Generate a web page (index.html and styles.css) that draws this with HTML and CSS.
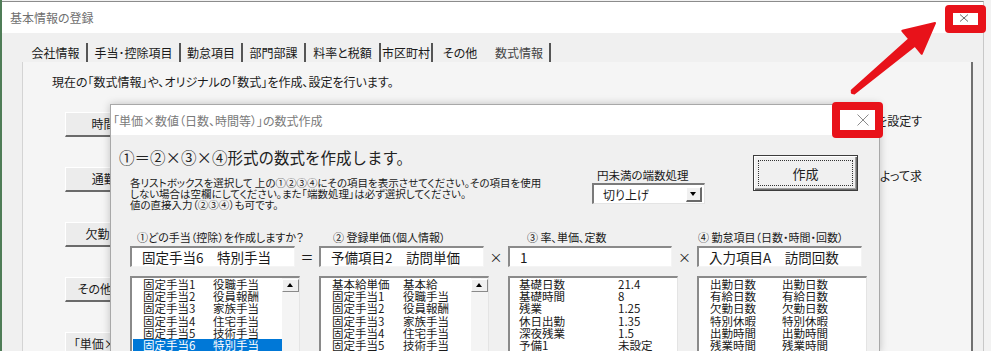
FILE: index.html
```html
<!DOCTYPE html>
<html lang="ja">

<head>
    <meta charset="UTF-8">
    <meta name="viewport" content="width=device-width, initial-scale=1.0">
    <title>基本情報の登録</title>
    <link rel="stylesheet" href="styles.css">
</head>

<body>
    <div class="window">
        <div class="titlebar">
            <span class="title">基本情報の登録</span>
            <svg class="close-outer" width="10" height="8" viewBox="0 0 10 8">
                <path d="M1 0.5L9 7.5M9 0.5L1 7.5" stroke="#6b6b6b" stroke-width="1" fill="none"/>
            </svg>
        </div>

        <div class="window-body">
            <div class="tabs">
                <span class="tab">会社情報</span>
                <span class="tab">手当･控除項目</span>
                <span class="tab">勤怠項目</span>
                <span class="tab">部門部課</span>
                <span class="tab">料率と税額</span>
                <span class="tab">市区町村</span>
                <span class="tab before-active">その他</span>
                <span class="tab active">数式情報</span>
            </div>

            <div class="page">
                <p class="intro">現在の「数式情報」や、オリジナルの「数式」を作成、設定を行います。</p>

                <div class="rows">
                    <div class="row">
                        <div class="btn">時間外・休日・深夜</div>
                        <div class="note">時間外手当などの単価を基に計算する数式を設定す</div>
                    </div>
                    <div class="row">
                        <div class="btn">通勤手当の計算式</div>
                        <div class="note">通勤手当を距離や日数によって求</div>
                    </div>
                    <div class="row">
                        <div class="btn">欠勤、遅刻・早退控除</div>
                        <div class="note"></div>
                    </div>
                    <div class="row">
                        <div class="btn">その他数式の作成・設定</div>
                        <div class="note"></div>
                    </div>
                    <div class="row">
                        <div class="btn">「単価×数値」の数式作成</div>
                        <div class="note"></div>
                    </div>
                </div>
            </div>
        </div>
    </div>

    <div class="dialog">
        <div class="dlg-titlebar">
            <span class="dlg-title">「単価×数値（日数、時間等）」の数式作成</span>
            <svg class="close-inner" width="12" height="12" viewBox="0 0 12 12">
                <path d="M0.5 0.5L11.5 11.5M11.5 0.5L0.5 11.5" stroke="#8a8a8a" stroke-width="1" fill="none"/>
            </svg>
        </div>

        <div class="dlg-body">
            <div class="dlg-top">
                <div class="lead">
                    <h1>①＝②×③×④形式の数式を作成します。</h1>
                    <p>各リストボックスを選択して 上の①②③④にその項目を表示させてください。その項目を使用<br>しない場合は空欄にしてください。また「端数処理」は必ず選択してください。<br>値の直接入力（②③④）も可です。</p>
                </div>
                <div class="rounding">
                    <div class="rounding-label">円未満の端数処理</div>
                    <div class="select">
                        <span>切り上げ</span>
                        <span class="drop"></span>
                    </div>
                </div>
                <button class="make">作成</button>
            </div>

            <div class="fields">
                <div class="cap c1 cap-a">①どの手当（控除）を作成しますか？</div>
                <div class="cap c2 cap-b">② 登録単価（個人情報）</div>
                <div class="cap c3 cap-c">③ 率、単価、定数</div>
                <div class="cap c4 cap-d">④ 勤怠項目（日数・時間・回数）</div>

                <div class="input c1">固定手当6　特別手当</div>
                <div class="op o1">＝</div>
                <div class="input c2">予備項目2　訪問単価</div>
                <div class="op o2">×</div>
                <div class="input c3">1</div>
                <div class="op o3">×</div>
                <div class="input c4">入力項目A　訪問回数</div>

                <div class="list c1 list-a">
                    <div class="items">
                        <div class="item"><span class="k">固定手当1</span><span>役職手当</span></div>
                        <div class="item"><span class="k">固定手当2</span><span>役員報酬</span></div>
                        <div class="item"><span class="k">固定手当3</span><span>家族手当</span></div>
                        <div class="item"><span class="k">固定手当4</span><span>住宅手当</span></div>
                        <div class="item"><span class="k">固定手当5</span><span>技術手当</span></div>
                        <div class="item selected"><span class="k">固定手当6</span><span>特別手当</span></div>
                        <div class="item"><span class="k">固定手当7</span><span>資格手当</span></div>
                    </div>
                    <div class="scroll"><div class="scroll-up"></div></div>
                </div>

                <div class="list c2 list-b">
                    <div class="items">
                        <div class="item"><span class="k">基本給単価</span><span>基本給</span></div>
                        <div class="item"><span class="k">固定手当1</span><span>役職手当</span></div>
                        <div class="item"><span class="k">固定手当2</span><span>役員報酬</span></div>
                        <div class="item"><span class="k">固定手当3</span><span>家族手当</span></div>
                        <div class="item"><span class="k">固定手当4</span><span>住宅手当</span></div>
                        <div class="item"><span class="k">固定手当5</span><span>技術手当</span></div>
                        <div class="item"><span class="k">固定手当6</span><span>特別手当</span></div>
                    </div>
                    <div class="scroll"><div class="scroll-up"></div></div>
                </div>

                <div class="list c3 list-c">
                    <div class="items">
                        <div class="item"><span class="k">基礎日数</span><span>21.4</span></div>
                        <div class="item"><span class="k">基礎時間</span><span>8</span></div>
                        <div class="item"><span class="k">残業</span><span>1.25</span></div>
                        <div class="item"><span class="k">休日出勤</span><span>1.35</span></div>
                        <div class="item"><span class="k">深夜残業</span><span>1.5</span></div>
                        <div class="item"><span class="k">予備1</span><span>未設定</span></div>
                        <div class="item"><span class="k">予備2</span><span>未設定</span></div>
                    </div>
                </div>

                <div class="list c4 list-d">
                    <div class="items">
                        <div class="item"><span class="k">出勤日数</span><span>出勤日数</span></div>
                        <div class="item"><span class="k">有給日数</span><span>有給日数</span></div>
                        <div class="item"><span class="k">欠勤日数</span><span>欠勤日数</span></div>
                        <div class="item"><span class="k">特別休暇</span><span>特別休暇</span></div>
                        <div class="item"><span class="k">出勤時間</span><span>出勤時間</span></div>
                        <div class="item"><span class="k">残業時間</span><span>残業時間</span></div>
                        <div class="item"><span class="k">休出日数</span><span>休出日数</span></div>
                    </div>
                </div>
            </div>
        </div>
    </div>

    <!-- annotation: red boxes and arrow -->
    <div class="mark mark-outer"></div>
    <div class="mark mark-inner"></div>
    <svg class="arrow" width="991" height="351" viewBox="0 0 991 351">
        <polygon points="851.7,90.5 909.1,38.9 902.3,30.8 935,23 921.7,53.8 914.9,45.7 854.3,93.5"
            fill="#e8121a" stroke="#e8121a" stroke-width="2" stroke-linejoin="round"/>
        <circle cx="853" cy="92" r="2.3" fill="#e8121a"/>
    </svg>
</body>

</html>
```

FILE: styles.css
```css
html,
body {
    margin: 0;
    height: 351px;
    overflow: hidden;
}

body {
    position: relative;
    background: linear-gradient(to right, #4f7d57 0 2px, #f2f2f2 2px);
    font-family: "Noto Sans CJK JP", sans-serif;
    color: #1a1a1a;
}

/* outer window */

.window {
    margin: 1px 0 0 2px;
    width: 981px;
    height: 350px;
    overflow: hidden;
    border-top: 1px solid #8c8c8c;
    border-right: 1px solid #c8c8c8;
    background: #f0f0f0;
}

.titlebar {
    display: flex;
    justify-content: space-between;
    align-items: center;
    height: 31px;
    background: #fff;
}

.title {
    margin-left: 8px;
    font-size: 12px;
    color: #707070;
    font-feature-settings: "palt";
}

.close-outer {
    margin-right: 14px;
}

.window-body {
    padding: 0 10px 0 20px;
}

.tabs {
    display: grid;
    grid-template-columns: 63px 93px 62px 63px 75px 52px 56px 62px;
    height: 29px;
    margin-left: 3px;
}

.tab {
    align-self: end;
    height: 19px;
    line-height: 19px;
    font-size: 12px;
    text-align: center;
    white-space: nowrap;
    border-right: 2px solid #555;
    box-sizing: border-box;
    font-feature-settings: "palt";
}

.tab.before-active {
    border-right-color: transparent;
}

.tab.active {
    color: #444;
}

.page {
    height: 289px;
    overflow: hidden;
    padding: 12px 49px 0 29px;
    border-left: 1px solid #d4d4d4;
    border-right: 2px solid #707070;
    background: #f5f5f5;
}

.intro {
    margin: 0;
    font-size: 12px;
    line-height: 16px;
    font-feature-settings: "palt";
}

.rows {
    display: flex;
    flex-direction: column;
    gap: 30px;
    margin-top: 22px;
}

.row {
    display: flex;
    height: 25px;
}

.btn {
    margin-left: 13px;
    width: 150px;
    height: 25px;
    box-sizing: border-box;
    font-size: 12px;
    line-height: 22px;
    text-align: center;
    white-space: nowrap;
    overflow: hidden;
    background: #ececec;
    border-style: solid;
    border-width: 1px 2px 2px 1px;
    border-color: #fff #6a6a6a #6a6a6a #fff;
    font-feature-settings: "palt";
}

.note {
    flex: 1;
    padding-top: 1px;
    font-size: 12px;
    line-height: 16px;
    text-align: right;
    white-space: nowrap;
    overflow: hidden;
    font-feature-settings: "palt";
}

/* inner dialog */

.dialog {
    position: absolute;
    left: 110px;
    top: 104px;
    width: 768px;
    height: 247px;
    overflow: hidden;
    border: 1px solid #a8a8a8;
    border-bottom: 0;
    background: #f0f0f0;
    box-shadow: 0 0 8px rgba(0, 0, 0, 0.22);
}

.dlg-titlebar {
    display: flex;
    justify-content: space-between;
    align-items: center;
    height: 30px;
    background: #fff;
}

.dlg-title {
    margin-left: 2px;
    font-size: 12px;
    color: #7a7a7a;
    font-feature-settings: "palt";
}

.close-inner {
    margin-right: 10px;
}

.dlg-body {
    padding: 12px 0 0 8px;
}

.dlg-top {
    display: flex;
    height: 83px;
}

.lead {
    width: 473px;
}

.lead h1 {
    margin: 0;
    font-size: 15.5px;
    font-weight: 400;
    line-height: 20px;
    color: #222;
}

.lead p {
    margin: 10px 0 0 11px;
    font-size: 10.5px;
    line-height: 11px;
    white-space: nowrap;
    font-feature-settings: "palt";
}

.rounding {
    width: 113px;
    margin-top: 21px;
}

.rounding-label {
    margin-left: 5px;
    font-size: 11.5px;
    line-height: 14px;
    font-feature-settings: "palt";
}

.select {
    display: flex;
    align-items: center;
    justify-content: space-between;
    margin-top: 1px;
    height: 21px;
    box-sizing: border-box;
    padding: 0 2px 0 9px;
    background: #fff;
    border-style: solid;
    border-width: 2px 1px 1px 2px;
    border-color: #7a7a7a #e4e4e4 #e4e4e4 #7a7a7a;
    font-size: 12px;
    font-feature-settings: "palt";
}

.drop {
    position: relative;
    width: 16px;
    height: 15px;
    box-sizing: border-box;
    background: #f0f0f0;
    border-style: solid;
    border-width: 1px 2px 2px 1px;
    border-color: #fff #6a6a6a #6a6a6a #fff;
}

.drop::after {
    content: "";
    position: absolute;
    left: 3px;
    top: 4px;
    border-left: 3.5px solid transparent;
    border-right: 3.5px solid transparent;
    border-top: 4px solid #000;
}

.make {
    position: relative;
    margin: 8px 0 0 48px;
    width: 105px;
    height: 36px;
    padding: 0;
    font-family: inherit;
    font-size: 13px;
    color: #222;
    background: #f0f0f0;
    border: 1px solid #3c3c3c;
    box-shadow: inset 1px 1px #fff, inset -1px -1px #6e6e6e, inset -2px -2px #a0a0a0;
}

.make::after {
    content: "";
    position: absolute;
    inset: 4px;
    border: 1px dotted #333;
}

.fields {
    display: grid;
    grid-template-columns: 165px 24px 165px 24px 164px 25px 165px;
    margin-left: 11px;
}

.c1 { grid-column: 1; }
.c2 { grid-column: 3; }
.c3 { grid-column: 5; }
.c4 { grid-column: 7; }
.o1 { grid-column: 2; }
.o2 { grid-column: 4; }
.o3 { grid-column: 6; }

.cap {
    font-size: 11px;
    line-height: 14px;
    white-space: nowrap;
    font-feature-settings: "palt";
}

.cap-a { padding-left: 7px; }
.cap-b { padding-left: 14px; }
.cap-c { padding-left: 19px; }
.cap-d { padding-left: 1px; }

.input {
    margin-top: 2px;
    height: 21px;
    box-sizing: border-box;
    padding-left: 10px;
    font-size: 13.5px;
    line-height: 18px;
    background: #fff;
    border-style: solid;
    border-width: 2px 1px 1px 2px;
    border-color: #8a8a8a #f4f4f4 #f4f4f4 #8a8a8a;
    white-space: nowrap;
}

.op {
    margin-top: 2px;
    font-size: 13px;
    line-height: 22px;
    text-align: center;
}

.list {
    display: flex;
    margin-top: 8px;
    width: 170px;
    height: 76px;
    box-sizing: border-box;
    background: #fff;
    border-style: solid;
    border-width: 2px 1px 0 2px;
    border-color: #8a8a8a #e4e4e4 #e4e4e4 #8a8a8a;
    overflow: hidden;
}

.items {
    flex: 1;
    margin-left: 1px;
}

.item {
    display: flex;
    padding-left: 10px;
    font-size: 11.5px;
    line-height: 12.2px;
    white-space: nowrap;
}

.item.selected {
    background: #0078d7;
    color: #fff;
}

.list-a .k { width: 70px; }
.list-b .k { width: 71px; }
.list-c .k { width: 99px; }
.list-d .k { width: 72px; }

.list-c .item { padding-left: 8px; }

.scroll {
    width: 17px;
    background: #f4f4f4;
}

.scroll-up {
    position: relative;
    margin-top: 1px;
    height: 13px;
    box-sizing: border-box;
    background: #f0f0f0;
    border-style: solid;
    border-width: 1px;
    border-color: #fff #8a8a8a #8a8a8a #fff;
}

.scroll-up::after {
    content: "";
    position: absolute;
    left: 4px;
    top: 3px;
    border-left: 3.5px solid transparent;
    border-right: 3.5px solid transparent;
    border-bottom: 4px solid #000;
}

/* annotation */

.mark {
    position: absolute;
    box-sizing: border-box;
    border: 8px solid #e8121a;
    border-radius: 4px;
}

.mark-outer {
    left: 945px;
    top: 5px;
    width: 41px;
    height: 28px;
}

.mark-inner {
    left: 832px;
    top: 102px;
    width: 51px;
    height: 36px;
}

.arrow {
    position: absolute;
    left: 0;
    top: 0;
    pointer-events: none;
}
```
